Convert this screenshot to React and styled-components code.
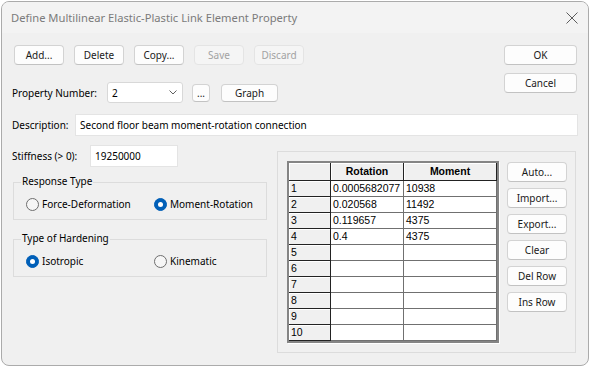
import React from 'react';
import styled, {createGlobalStyle} from "styled-components";

const GlobalStyle = createGlobalStyle`
html, body {
  margin:0;
  padding:0;
  background:#ffffff;
}
body {
  font-family:"Noto Sans", "Segoe UI", sans-serif;
  font-size:10px;
  color:#000;
}
*{box-sizing:border-box;}
`;

const StyledWindow = styled.div`
margin:1px 0 0 1px;
width:588px;
height:365px;
border:1px solid #ababab;
border-radius:8px;
background-color:#f0f0f0;
overflow:hidden;
display:flex;
flex-direction:column;
`;

const StyledTitleBar = styled.div`
height:31px;
flex-shrink:0;
background-color:#f3f3f3;
display:flex;
align-items:center;
justify-content:space-between;
padding-left:9px;
color:#7b7b7b;
font-size:11.2px;
`;

const StyledClose = styled.div`
width:32px;
height:31px;
display:flex;
align-items:center;
justify-content:center;
`;

const StyledBody = styled.div`
flex:1;
padding:12px 10px 0 10px;
display:flex;
flex-direction:column;
`;

const StyledTopSection = styled.div`
display:flex;
justify-content:space-between;
`;

const StyledColumn = styled.div`
display:flex;
flex-direction:column;
gap:${props=>props.gap || 0}px;
margin-right:${props=>props.right || 0}px;
`;

const StyledRow = styled.div`
display:flex;
align-items:center;
gap:${props=>props.gap || 0}px;
margin-left:${props=>props.left || 0}px;
margin-top:${props=>props.top || 0}px;
height:${props=>props.height ? props.height+"px" : "auto"};
`;

const StyledButton = styled.button`
width:${props=>props.width || 50}px;
height:${props=>props.height || 20}px;
padding:0;
font-family:inherit;
font-size:10px;
color:#1a1a1a;
background-color:#fdfdfd;
border:1px solid #d3d3d3;
border-bottom-color:#c2c2c2;
border-radius:4px;
flex-shrink:0;

&:disabled{
  background-color:#f5f5f5;
  border-color:#e4e4e4;
  color:#a2a2a2;
}
`;

const StyledLabel = styled.span`
width:${props=>props.width}px;
flex-shrink:0;
white-space:nowrap;
`;

const StyledCombo = styled.div`
width:76px;
height:21px;
background-color:#fff;
border:1px solid #d8d8d8;
border-radius:3px;
display:flex;
align-items:center;
justify-content:space-between;
padding:0 5px 0 4px;
margin-right:9px;
`;

const StyledInput = styled.div`
width:${props=>props.width ? props.width+"px" : "auto"};
flex:${props=>props.width ? "none" : 1};
height:22px;
background-color:#fff;
border:1px solid #e4e4e4;
display:flex;
align-items:center;
padding-left:4px;
`;

const StyledLowerSection = styled.div`
display:flex;
gap:10px;
margin-top:9px;
`;

const StyledGroup = styled.div`
position:relative;
width:254px;
height:38px;
margin:${props=>props.top}px 0 0 1px;
border:1px solid #dcdcdc;
display:grid;
grid-template-columns:128px 1fr;
padding:14px 0 0 12px;
`;

const StyledGroupTitle = styled.span`
position:absolute;
top:-9px;
left:7px;
padding:0 1px;
background-color:#f0f0f0;
`;

const StyledRadio = styled.div`
display:flex;
align-items:center;
gap:3px;
height:14px;
`;

const StyledRadioCircle = styled.span`
width:13px;
height:13px;
border-radius:50%;
flex-shrink:0;
display:flex;
align-items:center;
justify-content:center;
background-color:${props=>props.checked ? "#005fb8" : "#f6f6f6"};
border:1px solid ${props=>props.checked ? "#005fb8" : "#6e6e6e"};

&::after{
  content:"";
  width:5px;
  height:5px;
  border-radius:50%;
  background-color:#fff;
  display:${props=>props.checked ? "block" : "none"};
}
`;

const StyledPanel = styled.div`
width:299px;
height:202px;
margin-top:6px;
border:1px solid #dcdcdc;
padding:9px 0 0 9px;
display:flex;
gap:8px;
align-items:flex-start;
`;

const StyledGrid = styled.div`
width:212px;
height:182px;
border:2px solid #858585;
box-shadow:1px 1px 0 #ffffff;
display:grid;
grid-template-columns:42px 73px 1fr;
grid-template-rows:18px repeat(10, 16px);
background-color:#fff;
font-family:"Liberation Sans", Arial, sans-serif;
font-size:10.5px;
`;

const StyledHeadCell = styled.div`
background-color:#f0f0f0;
border-right:1px solid #222;
border-bottom:1px solid #222;
box-shadow:inset 1px 1px 0 #ffffff;
display:flex;
align-items:center;
justify-content:${props=>props.center ? "center" : "flex-start"};
padding-left:${props=>props.center ? 0 : 2}px;
font-weight:${props=>props.center ? 700 : 400};
line-height:1;
`;

const StyledCell = styled.div`
border-right:1px solid #707070;
border-bottom:1px solid #707070;
display:flex;
align-items:center;
padding-left:2px;
white-space:nowrap;
overflow:hidden;
line-height:1;
`;

const StyledSideButtons = styled.div`
display:flex;
flex-direction:column;
gap:6px;
margin-top:1px;
`;

const rows = [
  ["0.0005682077", "10938"],
  ["0.020568", "11492"],
  ["0.119657", "4375"],
  ["0.4", "4375"],
  ["", ""], ["", ""], ["", ""], ["", ""], ["", ""], ["", ""]
];

const Radio=({label, checked})=>(
  <StyledRadio>
    <StyledRadioCircle checked={checked}/>
    <span>{label}</span>
  </StyledRadio>
);

const App=()=>{
  return(
    <>
    <GlobalStyle/>
    <StyledWindow>
      <StyledTitleBar>
        <span>Define Multilinear Elastic-Plastic Link Element Property</span>
        <StyledClose>
          <svg width="12" height="12" viewBox="0 0 12 12">
            <path d="M0.5 0.5 L11.5 11.5 M11.5 0.5 L0.5 11.5" stroke="#5c5c5c" strokeWidth="1" fill="none"/>
          </svg>
        </StyledClose>
      </StyledTitleBar>
      <StyledBody>
        <StyledTopSection>
          <StyledColumn gap={17}>
            <StyledRow gap={10} left={2}>
              <StyledButton>Add...</StyledButton>
              <StyledButton>Delete</StyledButton>
              <StyledButton>Copy...</StyledButton>
              <StyledButton disabled>Save</StyledButton>
              <StyledButton disabled>Discard</StyledButton>
            </StyledRow>
            <StyledRow height={21}>
              <StyledLabel width={95}>Property Number:</StyledLabel>
              <StyledCombo>
                <span>2</span>
                <svg width="8" height="5" viewBox="0 0 8 5">
                  <path d="M0.5 0.5 L4 4 L7.5 0.5" stroke="#606060" strokeWidth="1" fill="none"/>
                </svg>
              </StyledCombo>
              <StyledButton width={18} height={18}>...</StyledButton>
              <StyledRow left={11}>
                <StyledButton width={57} height={18}>Graph</StyledButton>
              </StyledRow>
            </StyledRow>
          </StyledColumn>
          <StyledColumn gap={8} right={1}>
            <StyledButton width={73}>OK</StyledButton>
            <StyledButton width={73}>Cancel</StyledButton>
          </StyledColumn>
        </StyledTopSection>

        <StyledRow top={11}>
          <StyledLabel width={63}>Description:</StyledLabel>
          <StyledInput>Second floor beam moment-rotation connection</StyledInput>
        </StyledRow>

        <StyledLowerSection>
          <StyledColumn>
            <StyledRow>
              <StyledLabel width={78}>Stiffness (&gt; 0):</StyledLabel>
              <StyledInput width={88}>19250000</StyledInput>
            </StyledRow>
            <StyledGroup top={15}>
              <StyledGroupTitle>Response Type</StyledGroupTitle>
              <Radio label="Force-Deformation"/>
              <Radio label="Moment-Rotation" checked/>
            </StyledGroup>
            <StyledGroup top={19}>
              <StyledGroupTitle>Type of Hardening</StyledGroupTitle>
              <Radio label="Isotropic" checked/>
              <Radio label="Kinematic"/>
            </StyledGroup>
          </StyledColumn>

          <StyledPanel>
            <StyledGrid>
              <StyledHeadCell/>
              <StyledHeadCell center>Rotation</StyledHeadCell>
              <StyledHeadCell center>Moment</StyledHeadCell>
              {rows.map((r, i)=>(
                <React.Fragment key={i}>
                  <StyledHeadCell>{i+1}</StyledHeadCell>
                  <StyledCell>{r[0]}</StyledCell>
                  <StyledCell>{r[1]}</StyledCell>
                </React.Fragment>
              ))}
            </StyledGrid>
            <StyledSideButtons>
              <StyledButton width={60}>Auto...</StyledButton>
              <StyledButton width={60}>Import...</StyledButton>
              <StyledButton width={60}>Export...</StyledButton>
              <StyledButton width={60}>Clear</StyledButton>
              <StyledButton width={60}>Del Row</StyledButton>
              <StyledButton width={60}>Ins Row</StyledButton>
            </StyledSideButtons>
          </StyledPanel>
        </StyledLowerSection>
      </StyledBody>
    </StyledWindow>
    </>
  )
}
export default App;
